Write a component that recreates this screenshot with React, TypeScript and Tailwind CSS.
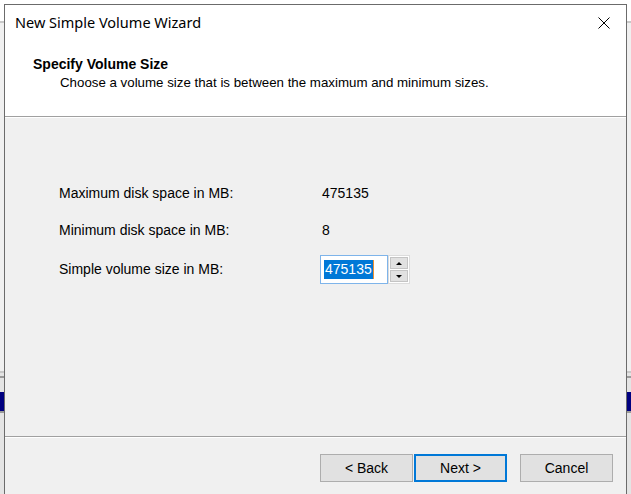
import React from "react";

const sans = { fontFamily: '"Liberation Sans", Arial, sans-serif' };

const Strip: React.FC = () => (
  <div className="flex w-[4px] shrink-0 flex-col bg-[#f0f0f0]">
    <div className="h-[17px] bg-white" />
    <div className="h-[2px] bg-[#c8c8c8]" />
    <div className="h-[348px] bg-[#f0f0f0]" />
    <div className="h-[2px] bg-[#c8c8c8]" />
    <div className="h-[3px] bg-[#e4e4e4]" />
    <div className="h-[2px] bg-[#9a9a9a]" />
    <div className="h-[14px] bg-[#e4e4e4]" />
    <div className="h-[19px] bg-[#000080]" />
    <div className="h-[2px] bg-[#9a9a9a]" />
    <div className="flex-1 bg-[#e4e4e4]" />
  </div>
);

const Button: React.FC<{ label: string; focused?: boolean }> = ({ label, focused }) => (
  <button
    className={
      focused
        ? "flex h-[28px] w-[93px] items-center justify-center border border-[#0078d7] bg-[#e1e1e1] text-[14px] text-black shadow-[inset_0_0_0_1px_#0078d7]"
        : "flex h-[28px] w-[93px] items-center justify-center border border-[#adadad] bg-[#e1e1e1] text-[14px] text-black"
    }
    style={sans}
  >
    {label}
  </button>
);

const SpinInput: React.FC = () => (
  <div className="flex h-[29px] items-stretch">
    <div className="flex w-[68px] items-center border border-[#7eb4ea] bg-white pl-[3px]">
      <span className="bg-[#0078d7] px-[1px] text-[14px] leading-[19px] text-white">475135</span>
      <span className="h-[19px] w-[1px] bg-[#f09030]" />
    </div>
    <div className="flex w-[22px] flex-col gap-[1px] border border-[#dcdcdc] bg-white p-[1px]">
      <div className="flex flex-1 items-center justify-center border border-[#c4c4c4] bg-[#e1e1e1]">
        <div className="h-0 w-0 border-x-[3px] border-b-[3px] border-x-transparent border-b-black" />
      </div>
      <div className="flex flex-1 items-center justify-center border border-[#c4c4c4] bg-[#e1e1e1]">
        <div className="h-0 w-0 border-x-[3px] border-t-[3px] border-x-transparent border-t-black" />
      </div>
    </div>
  </div>
);

export default function App() {
  return (
    <div className="flex h-[494px] w-[631px] flex-col overflow-hidden bg-[#f0f0f0]" style={sans}>
      <div className="h-[4px] shrink-0 bg-white" />
      <div className="flex flex-1">
        <Strip />
        <div className="flex w-[623px] shrink-0 flex-col border-l border-t border-r border-[#6b6b6b]">
          {/* title bar */}
          <div className="flex h-[31px] items-center justify-between bg-white pl-[10px] pt-[4px]">
            <span
              className="text-[14.5px] text-black"
              style={{ fontFamily: '"Segoe UI", "Noto Sans", sans-serif' }}
            >
              New Simple Volume Wizard
            </span>
            <div className="flex h-full w-[44px] items-center justify-center">
              <svg width="12" height="12" viewBox="0 0 12 12">
                <path d="M0.5 0.5 L11.5 11.5 M11.5 0.5 L0.5 11.5" stroke="#000" strokeWidth="1" />
              </svg>
            </div>
          </div>
          {/* header */}
          <div className="flex h-[80px] flex-col bg-white pl-[28px] pt-[20px]">
            <span className="text-[14px] font-bold leading-[17px] text-black">Specify Volume Size</span>
            <span className="mt-[1px] pl-[27px] text-[13.3px] leading-[17px] text-black">
              Choose a volume size that is between the maximum and minimum sizes.
            </span>
          </div>
          <div className="h-[1px] bg-[#a0a0a0]" />
          <div className="h-[1px] bg-white" />
          {/* body */}
          <div className="flex h-[318px] flex-col bg-[#f0f0f0] pl-[54px] pt-[67px] text-[14px] text-black">
            <div className="flex h-[16px] items-center">
              <span className="w-[263px]">Maximum disk space in MB:</span>
              <span>475135</span>
            </div>
            <div className="mt-[21px] flex h-[16px] items-center">
              <span className="w-[263px]">Minimum disk space in MB:</span>
              <span>8</span>
            </div>
            <div className="mt-[17px] flex items-center">
              <span className="w-[261px]">Simple volume size in MB:</span>
              <SpinInput />
            </div>
          </div>
          <div className="h-[1px] bg-[#a0a0a0]" />
          <div className="h-[1px] bg-white" />
          {/* footer */}
          <div className="flex flex-1 bg-[#f0f0f0] pl-[315px] pt-[16px]">
            <div className="flex h-[28px] items-start">
              <Button label="< Back" />
              <div className="ml-[1px]">
                <Button label="Next >" focused />
              </div>
              <div className="ml-[13px]">
                <Button label="Cancel" />
              </div>
            </div>
          </div>
        </div>
        <Strip />
      </div>
    </div>
  );
}
